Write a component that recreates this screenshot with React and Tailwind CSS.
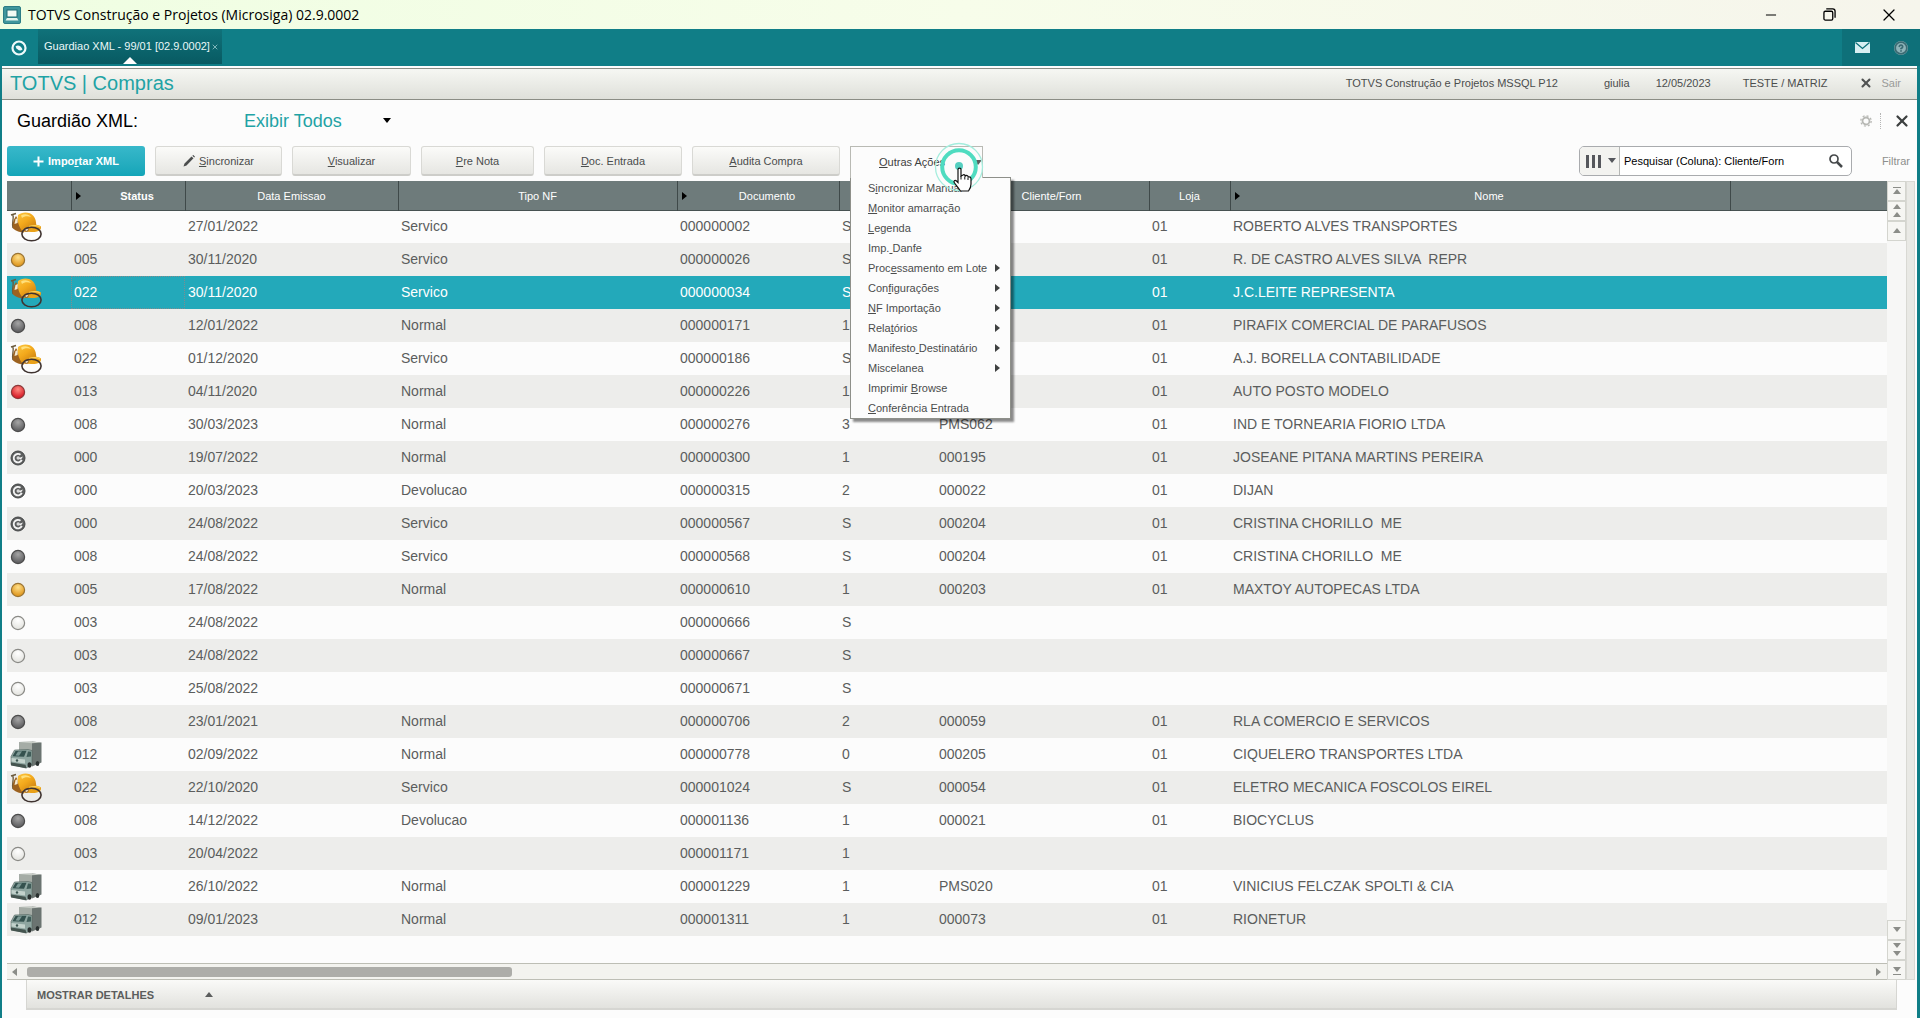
import {
  LuCircleHelp,
  LuMinus,
  LuX,
} from 'react-icons/lu';

const columns = [
  { key: 'status', label: 'Status', width: 'w-[114px]', sorted: true, bold: true },
  { key: 'date', label: 'Data Emissao', width: 'w-[213px]' },
  { key: 'type', label: 'Tipo NF', width: 'w-[279px]' },
  { key: 'doc', label: 'Documento', width: 'w-[162px]', sorted: true },
  { key: 'serie', label: 'Serie', width: 'w-[97px]' },
  { key: 'client', label: 'Cliente/Forn', width: 'w-[213px]', sorted: true },
  { key: 'store', label: 'Loja', width: 'w-[81px]' },
  { key: 'name', label: 'Nome', width: 'w-[500px]', sorted: true },
];

const rows = [
  ['helmet', '022', '27/01/2022', 'Servico', '000000002', 'S', '', '01', 'ROBERTO ALVES TRANSPORTES'],
  ['orange', '005', '30/11/2020', 'Servico', '000000026', 'S', '', '01', 'R. DE CASTRO ALVES SILVA  REPR'],
  ['helmet', '022', '30/11/2020', 'Servico', '000000034', 'S', '', '01', 'J.C.LEITE REPRESENTA'],
  ['gray', '008', '12/01/2022', 'Normal', '000000171', '1', '', '01', 'PIRAFIX COMERCIAL DE PARAFUSOS'],
  ['helmet', '022', '01/12/2020', 'Servico', '000000186', 'S', '', '01', 'A.J. BORELLA CONTABILIDADE'],
  ['red', '013', '04/11/2020', 'Normal', '000000226', '1', '', '01', 'AUTO POSTO MODELO'],
  ['gray', '008', '30/03/2023', 'Normal', '000000276', '3', 'PMS062', '01', 'IND E TORNEARIA FIORIO LTDA'],
  ['c', '000', '19/07/2022', 'Normal', '000000300', '1', '000195', '01', 'JOSEANE PITANA MARTINS PEREIRA'],
  ['c', '000', '20/03/2023', 'Devolucao', '000000315', '2', '000022', '01', 'DIJAN'],
  ['c', '000', '24/08/2022', 'Servico', '000000567', 'S', '000204', '01', 'CRISTINA CHORILLO  ME'],
  ['gray', '008', '24/08/2022', 'Servico', '000000568', 'S', '000204', '01', 'CRISTINA CHORILLO  ME'],
  ['orange', '005', '17/08/2022', 'Normal', '000000610', '1', '000203', '01', 'MAXTOY AUTOPECAS LTDA'],
  ['white', '003', '24/08/2022', '', '000000666', 'S', '', '', ''],
  ['white', '003', '24/08/2022', '', '000000667', 'S', '', '', ''],
  ['white', '003', '25/08/2022', '', '000000671', 'S', '', '', ''],
  ['gray', '008', '23/01/2021', 'Normal', '000000706', '2', '000059', '01', 'RLA COMERCIO E SERVICOS'],
  ['truck', '012', '02/09/2022', 'Normal', '000000778', '0', '000205', '01', 'CIQUELERO TRANSPORTES LTDA'],
  ['helmet', '022', '22/10/2020', 'Servico', '000001024', 'S', '000054', '01', 'ELETRO MECANICA FOSCOLOS EIREL'],
  ['gray', '008', '14/12/2022', 'Devolucao', '000001136', '1', '000021', '01', 'BIOCYCLUS'],
  ['white', '003', '20/04/2022', '', '000001171', '1', '', '', ''],
  ['truck', '012', '26/10/2022', 'Normal', '000001229', '1', 'PMS020', '01', 'VINICIUS FELCZAK SPOLTI & CIA'],
  ['truck', '012', '09/01/2023', 'Normal', '000001311', '1', '000073', '01', 'RIONETUR'],
];

const SELECTED = 2;

// "&" comes before the shortcut letter
const actions = [
  { label: '&Visualizar', width: 'w-[119px]' },
  { label: '&Pre Nota', width: 'w-[113px]' },
  { label: '&Doc. Entrada', width: 'w-[138px]' },
  { label: '&Audita Compra', width: 'w-[148px]' },
];

const menuItems = [
  { label: 'S&incronizar Manual' },
  { label: '&Monitor amarração' },
  { label: '&Legenda' },
  { label: 'Imp.& Danfe' },
  { label: 'Proc&essamento em Lote', sub: true },
  { label: 'Con&figurações', sub: true },
  { label: '&NF Importação', sub: true },
  { label: 'Rela&tórios', sub: true },
  { label: 'Manifesto& Destinatário', sub: true },
  { label: 'Miscelanea', sub: true },
  { label: 'Imprimir &Browse' },
  { label: '&Conferência Entrada' },
];

function Mnemonic({ text }) {
  const i = text.indexOf('&');
  if (i < 0) return <span>{text}</span>;
  return (
    <span className="whitespace-pre">
      {text.slice(0, i)}
      <u>{text[i + 1]}</u>
      {text.slice(i + 2)}
    </span>
  );
}

const ballColors = {
  orange: ['#ffe08a', '#e09a24', '#9a7434'],
  gray: ['#a5a5a5', '#626264', '#4c4c4c'],
  red: ['#ff8a80', '#d81f2a', '#8c3a3a'],
  white: ['#ffffff', '#e6e6e2', '#8a8a86'],
};

function Ball({ color }) {
  const [light, base, edge] = ballColors[color];
  return (
    <svg className="w-4 h-4" viewBox="0 0 16 16">
      <defs>
        <radialGradient id={`ball-${color}`} cx="50%" cy="30%" r="60%">
          <stop offset="0" stopColor={light} />
          <stop offset="1" stopColor={base} />
        </radialGradient>
      </defs>
      <circle cx="8" cy="8" r="6.6" fill={`url(#ball-${color})`} stroke={edge} strokeWidth="1.2" />
    </svg>
  );
}

function Copyright() {
  return (
    <svg className="w-4 h-4" viewBox="0 0 16 16">
      <circle cx="8" cy="8" r="7" fill="#5c5e5e" stroke="#454747" />
      <path d="M10.5 4.8A4.2 4.2 0 1 0 11.8 9.8" fill="none" stroke="#f4f4f4" strokeWidth="1.8" />
      <path d="M7.5 8.5L13 6.5L11 9.5Z" fill="#f4f4f4" />
      <circle cx="8.2" cy="8" r="1.7" fill="#d8d8d8" />
    </svg>
  );
}

function Helmet() {
  return (
    <svg className="w-8 h-[30px]" viewBox="0 0 32 30">
      <defs>
        <linearGradient id="helmet-dome" x1="0" y1="0" x2="0.7" y2="1">
          <stop offset="0" stopColor="#fbc53e" />
          <stop offset="0.5" stopColor="#f3a91c" />
          <stop offset="1" stopColor="#c97f12" />
        </linearGradient>
      </defs>
      <path d="M1 3L6 1.5M3 3C4 7 1.5 12 3 16" fill="none" stroke="#6b5a3c" strokeWidth="1.4" />
      <path d="M6 4C3 8 2 13 3 16.5C6 19 10 20.5 14 20.5L13 15Z" fill="#9c6220" />
      <path d="M5.500 7L8 6L7.500 11L4.500 12Z" fill="#f3ead2" />
      <path d="M8 3C12 -0.5 20 -0.5 23.500 4C26 7.500 26.500 11 26 15C23 19.500 17 20.500 13 19.500C9 16 7 9 8 3Z" fill="url(#helmet-dome)" />
      <path d="M11 3.500C14 1.500 19 2 21 5C18 3.500 14 4 12 6Z" fill="#ffe07c" />
      <path d="M19 13.500C23 12.500 29 12.500 31 14.500C31.500 17 30 19 27 19.500C23 20.500 19 20 17 19Z" fill="#e9a119" />
      <path d="M19 14.500C23 13.500 28 13.500 30 15" fill="none" stroke="#fcd25a" strokeWidth="1.200" />
      <circle cx="16.500" cy="17.500" r="1.800" fill="#f5e9cf" stroke="#7b4a1a" strokeWidth="0.800" />
      <ellipse cx="21.500" cy="22" rx="9.600" ry="6.800" fill="none" stroke="#3f3330" strokeWidth="1.600" />
    </svg>
  );
}

function Truck() {
  return (
    <svg className="w-8 h-7" viewBox="0 0 32 28">
      <path d="M9 1L22 0.500V13H9Z" fill="#a5aca6" />
      <path d="M22 0.500L31.500 1.500V21.500L22 25.500Z" fill="#6b7471" />
      <path d="M9 1L22 0.500L31.500 1.500L22 2.200Z" fill="#c7ccc6" />
      <path d="M4.500 9L18 8.500L22 9.500V24L16 27L1 23.500V15.500Z" fill="#8ea5a0" stroke="#51615d" strokeWidth="0.600" />
      <path d="M5.500 10L16.500 9.800L14 15.800L2.500 15.200Z" fill="#34514e" />
      <path d="M8 10.500L12 10.300L9 14.800L5.500 14.600Z" fill="#7c9894" />
      <path d="M18 10.500L21 10.800V15.500L16.500 16Z" fill="#3f5c58" />
      <path d="M1.500 17L15 18.500V22.500L1.500 20.500Z" fill="#c3d2cc" />
      <path d="M1 21.500L15.500 23.800L16.500 27.300L1 24.500Z" fill="#44544f" />
      <circle cx="7" cy="19.500" r="1.200" fill="#3b5550" />
      <ellipse cx="19.500" cy="24" rx="2" ry="2.800" fill="#2a3130" />
      <ellipse cx="27.500" cy="22.500" rx="1.800" ry="2.500" fill="#2a3130" />
    </svg>
  );
}

function StatusIcon({ kind }) {
  if (kind === 'helmet') return <Helmet />;
  if (kind === 'truck') return <Truck />;
  if (kind === 'c') return <Copyright />;
  return <Ball color={kind} />;
}

const triangles = {
  right: '1,0 6,4 1,8',
  left: '6,0 1,4 6,8',
  down: '0,1 8,1 4,6',
  up: '0,6 8,6 4,1',
};

function Triangle({ dir, className }) {
  return (
    <svg className={`w-2 h-2 shrink-0 fill-current ${className ?? ''}`} viewBox="0 0 8 8">
      <polygon points={triangles[dir]} />
    </svg>
  );
}

function TitleBar() {
  return (
    <header className="flex items-center h-[29px] pl-[3px] bg-linear-to-r from-[#effee2] via-[#f7fdea] to-[#f6f5ec]">
      <svg className="w-[18px] h-[18px]" viewBox="0 0 18 18">
        <rect x="0.500" y="0.500" width="17" height="17" rx="1.500" fill="#3f979d" stroke="#2c7d86" />
        <rect x="4" y="4" width="10" height="7" fill="#f3fbf4" stroke="#1f6c75" />
        <path d="M2.500 14.500H15.500L14 12H4Z" fill="#e3f4ec" />
      </svg>
      <h1 className="pl-[7px] font-['Open_Sans',sans-serif] text-[14px] text-black">
        TOTVS Construção e Projetos (Microsiga) 02.9.0002
      </h1>
      <div className="flex ml-auto text-black">
        <button className="w-[58px] h-[29px] flex items-center justify-center" aria-label="Minimizar">
          <LuMinus className="w-4 h-4" strokeWidth="1.500" />
        </button>
        <button className="w-[58px] h-[29px] flex items-center justify-center" aria-label="Restaurar">
          <svg className="w-[13px] h-[13px]" viewBox="0 0 14 14" fill="none" stroke="currentColor" strokeWidth="1.400">
            <rect x="1" y="3.500" width="9.500" height="9.500" rx="1.500" />
            <path d="M3.500 1H10.500Q13 1 13 3.500V10.500" />
          </svg>
        </button>
        <button className="w-[62px] h-[29px] flex items-center justify-center" aria-label="Fechar">
          <LuX className="w-5 h-5" strokeWidth="1.500" />
        </button>
      </div>
    </header>
  );
}

function TabBar() {
  return (
    <div className="flex items-stretch h-[37px] bg-[#107e87] text-[11px]">
      <button className="w-[38px] flex items-center justify-center" aria-label="Início">
        <svg className="w-4 h-4" viewBox="0 0 16 16">
          <circle cx="8" cy="8" r="6.500" fill="none" stroke="#effafa" strokeWidth="2.200" />
          <path d="M4.500 6.500C7 4.500 10 6 11.500 9.500C9 11.500 6 10 4.500 6.500Z" fill="#effafa" />
        </svg>
      </button>
      <div className="relative flex items-center w-[184px] h-[35px] pl-[6px] bg-linear-to-b from-[#10727a] to-[#085a62] text-[#eaf8f8]">
        <a href="#guardiao" className="whitespace-nowrap">Guardiao XML - 99/01 [02.9.0002]</a>
        <button className="ml-auto mr-[3px] text-[#b9dfe1]" aria-label="Fechar aba">
          <LuX className="w-2 h-2" />
        </button>
        <svg className="absolute bottom-0 left-[85px] w-[14px] h-[7px]" viewBox="0 0 14 7">
          <polygon points="0,7 7,0 14,7" fill="#fff" />
        </svg>
      </div>
      <div className="flex items-center gap-6 ml-auto pl-[13px] pr-3 bg-[#0e7079]">
        <button aria-label="Mensagens">
          <svg className="w-[15px] h-[11px]" viewBox="0 0 15 11">
            <rect width="15" height="11" fill="#d9eff2" />
            <path d="M0.500 0.500L7.500 6.500L14.500 0.500" fill="none" stroke="#0e7079" strokeWidth="1.300" />
          </svg>
        </button>
        <button className="rounded-full bg-[#8db3b8] text-[#3a6b73]" aria-label="Ajuda">
          <LuCircleHelp className="w-[14px] h-[14px]" strokeWidth="3" />
        </button>
      </div>
    </div>
  );
}

function ModuleBar() {
  return (
    <div className="flex items-center h-8 mt-[2px] pb-[2px] pl-2 pr-4 border-y border-[#8b8d85] bg-linear-to-b from-[#f6f7f3] to-[#dfe0da] text-[11px] text-[#4b4d4d]">
      <h2 className="text-[20px] leading-6 text-[#1fa3a5]">TOTVS | Compras</h2>
      <span className="ml-auto">TOTVS Construção e Projetos MSSQL P12</span>
      <span className="ml-[46px]">giulia</span>
      <span className="ml-[26px]">12/05/2023</span>
      <span className="ml-8">TESTE / MATRIZ</span>
      <button className="flex items-center gap-2 ml-8 text-[#9a9b99]">
        <LuX className="w-[14px] h-[14px] text-[#505252]" strokeWidth="3.500" />
        Sair
      </button>
    </div>
  );
}

function BrowseTitle() {
  return (
    <div className="flex items-center h-[42px] pl-[15px] pr-[6px] text-[18px]">
      <label htmlFor="view" className="w-[227px] text-black">Guardião XML:</label>
      <div className="relative flex items-center">
        <select id="view" className="appearance-none w-[151px] text-[#1fa3a5] bg-transparent outline-none">
          <option>Exibir Todos</option>
        </select>
        <Triangle dir="down" className="absolute right-1 text-black pointer-events-none" />
      </div>
      <div className="flex items-center ml-auto">
        <button aria-label="Configurar">
          <svg className="w-3 h-3" viewBox="0 0 12 12" fill="none" stroke="#b7b8b4">
            <circle cx="6" cy="6" r="3.500" strokeWidth="1.800" />
            <circle cx="6" cy="6" r="5.200" strokeWidth="1.300" strokeDasharray="2 2.080" />
          </svg>
        </button>
        <span className="h-4 ml-2 mr-3 border-l border-dotted border-[#b5b5b5]" />
        <button aria-label="Fechar consulta">
          <LuX className="w-[18px] h-[18px] text-[#3d4040]" strokeWidth="3" />
        </button>
      </div>
    </div>
  );
}

const buttonStyle =
  'h-[30px] flex items-center justify-center rounded-[3px] border border-[#d9d9d5] border-b-2 border-b-[#cdcdc9] bg-linear-to-b from-[#fbfbf9] to-[#e6e6e2] pt-px text-[#4b4d4d]';

function ActionsMenu() {
  return (
    <div className="relative z-10 h-[30px]">
      <button className="relative z-10 flex items-center justify-between w-[133px] h-8 pl-7 border border-b-0 border-[#b9bab4] bg-[#fcfcfc] text-[#3f4141]" aria-haspopup="menu" aria-expanded="true">
        <Mnemonic text="&Outras Ações" />
        <Triangle dir="down" className="text-[#5a5c5c]" />
      </button>
      <ul className="absolute left-0 top-[31px] w-[161px] h-[242px] border border-[#8e908a] bg-[#fcfcfc] shadow-[3px_3px_2px_rgba(0,0,0,0.450)] text-[#4b4d4d]" role="menu">
        {menuItems.map(({ label, sub }) => (
          <li key={label} role="none">
            <button className="flex items-center justify-between w-full h-5 pl-[17px] pr-2" role="menuitem">
              <Mnemonic text={label} />
              {sub && <Triangle dir="right" className="text-[#3f4141]" />}
            </button>
          </li>
        ))}
      </ul>
      {/* Click ripple and pointer */}
      <svg className="absolute z-20 left-[84px] -top-[4px] w-[50px] h-[52px] pointer-events-none" viewBox="0 0 50 52">
        <circle cx="25" cy="25" r="23.500" fill="none" stroke="#a4eddd" strokeWidth="1.300" />
        <circle cx="25" cy="25" r="16.800" fill="none" stroke="#4fdcc0" strokeWidth="4" />
        <circle cx="25" cy="24" r="4" fill="#55cfc0" />
        <path d="M24 27.500C24 25.700 27 25.700 27 27.500V34L29 33C30 32.300 31 33 31.300 34C32.500 33 34 33.500 34.300 35C36 34.300 37 35.500 37 37V42C37 45 36 47 34.500 49H26.500C24.500 46 22 43 20.500 41C19 39 21 37.500 22.500 39L24 40.500Z" fill="#fff" stroke="#111" strokeWidth="1.200" />
        <path d="M27 34V37.500M30.800 34.500V37.500M34 35.500V38" stroke="#111" />
      </svg>
    </div>
  );
}

function Toolbar() {
  return (
    <div className="flex items-center gap-[10px] h-[30px] ml-[5px] mr-[7px] mt-1 text-[11px]">
      <button className="h-[30px] w-[138px] flex items-center justify-center gap-1 rounded-[3px] bg-linear-to-b from-[#37b8ca] to-[#12a5b8] font-bold text-white">
        <svg className="w-[11px] h-[11px]" viewBox="0 0 11 11" stroke="#fff" strokeWidth="2">
          <path d="M5.500 0.500V10.500M0.500 5.500H10.500" />
        </svg>
        <Mnemonic text="Impo&rtar XML" />
      </button>
      <button className={`${buttonStyle} w-[127px] gap-1`}>
        <svg className="w-3 h-3" viewBox="0 0 12 12" fill="#4b4d4d">
          <path d="M0.500 11.500L1.500 8.500L8.500 1.500L10.500 3.200L3.500 10.500ZM9.300 0.800L10.300 0L12 1.700L11.200 2.500Z" />
        </svg>
        <Mnemonic text="&Sincronizar" />
      </button>
      {actions.map(({ label, width }) => (
        <button key={label} className={`${buttonStyle} ${width}`}>
          <Mnemonic text={label} />
        </button>
      ))}
      <ActionsMenu />
      <div className="flex items-center w-[273px] h-[30px] ml-auto border border-[#a9abae] rounded-[5px] bg-white overflow-hidden">
        <button className="flex items-center justify-between w-10 h-full pl-[6px] pr-[3px] border-r border-[#b5b7b5] bg-[#f3f3f0] text-[#55575c]" aria-label="Escolher coluna">
          <svg className="w-[15px] h-[13px]" viewBox="0 0 15 13" fill="currentColor">
            <path d="M0 0H3V13H0ZM6 0H9V13H6ZM12 0H15V13H12Z" />
          </svg>
          <Triangle dir="down" />
        </button>
        <input aria-label="Pesquisar" className="flex-1 min-w-0 h-full pl-1 text-black outline-none" defaultValue="Pesquisar (Coluna): Cliente/Forn" />
        <button className="pr-2" aria-label="Buscar">
          <svg className="w-[14px] h-[14px]" viewBox="0 0 14 14" fill="none" stroke="#46494b">
            <circle cx="5" cy="5" r="4" strokeWidth="1.700" />
            <path d="M8 8L13 13" strokeWidth="2.500" />
          </svg>
        </button>
      </div>
      <button className="w-9 ml-3 text-right text-[#8d8f8d]">Filtrar</button>
    </div>
  );
}

function ScrollButton({ label, children }) {
  return (
    <button className="flex flex-col items-center justify-center w-[19px] h-5 border border-[#d4d5cf] bg-[#f6f6f3] text-[#8b8d88]" aria-label={label}>
      {children}
    </button>
  );
}

function VerticalScroll() {
  return (
    <div className="flex flex-col justify-between w-[19px] bg-[#f7f7f6]">
      <div>
        <ScrollButton label="Início da lista">
          <span className="w-2 border-t border-current" />
          <Triangle dir="up" />
        </ScrollButton>
        <ScrollButton label="Página anterior">
          <Triangle dir="up" />
          <Triangle dir="up" />
        </ScrollButton>
        <ScrollButton label="Linha anterior"><Triangle dir="up" /></ScrollButton>
      </div>
      <div>
        <ScrollButton label="Próxima linha"><Triangle dir="down" /></ScrollButton>
        <ScrollButton label="Próxima página">
          <Triangle dir="down" />
          <Triangle dir="down" />
        </ScrollButton>
        <ScrollButton label="Fim da lista">
          <Triangle dir="down" />
          <span className="w-2 border-t border-current" />
        </ScrollButton>
      </div>
    </div>
  );
}

function rowStyle(i) {
  if (i === SELECTED) return 'bg-[#23a9ba] text-white';
  return i % 2 ? 'bg-[#ededeb] text-[#5b5d5d]' : 'text-[#5b5d5d]';
}

function InvoiceTable() {
  return (
    <table className="w-full table-fixed text-[14px]">
      <thead>
        <tr className="h-[29px] bg-[#6e7b7b] text-[11px] text-white border-b border-[#475252]">
          <th className="w-16 border-r border-[#3f4949]" aria-label="Legenda" />
          {columns.map(({ key, label, width, sorted, bold }) => (
            <th key={key} className={`${width} border-r border-[#3f4949] p-0 pt-[2px] ${bold ? 'font-bold' : 'font-normal'}`}>
              <div className="flex items-center">
                {sorted && <Triangle dir="right" className="ml-[3px] mr-[7px] text-black" />}
                <span className="flex-1 text-center">{label}</span>
              </div>
            </th>
          ))}
          <th aria-label="Vazio" />
        </tr>
      </thead>
      <tbody>
        {rows.map(([icon, ...cells], i) => (
          <tr key={cells[3]} className={`h-[33px] ${rowStyle(i)}`}>
            <td className="p-0 pl-[3px]"><StatusIcon kind={icon} /></td>
            {cells.map((value, j) => (
              <td
                key={columns[j].key}
                className={`p-0 pl-[3px] whitespace-pre ${i === SELECTED && j === 0 ? 'outline-1 outline-dotted -outline-offset-1 outline-[#7d8d90]' : ''}`}
              >
                {value}
              </td>
            ))}
            <td />
          </tr>
        ))}
      </tbody>
    </table>
  );
}

export default function App() {
  return (
    <div className="flex flex-col min-h-screen bg-[#107e87] font-['Liberation_Sans',Arial,sans-serif]">
      <TitleBar />
      <TabBar />
      <main className="flex flex-col flex-1 ml-[2px] mr-[3px] bg-[#fcfcfc]">
        <ModuleBar />
        <BrowseTitle />
        <Toolbar />
        <div className="flex flex-1 mt-[5px] ml-[5px]">
          <div className="flex flex-col flex-1 min-w-0">
            <div className="flex-1">
              <InvoiceTable />
            </div>
            <div className="flex items-center justify-between h-[17px] px-1 border-y border-[#bdbeb5] bg-[#f3f3ef] text-[#8b8d88]">
              <div className="flex items-center flex-1 gap-2">
                <Triangle dir="left" />
                <div className="w-[26%] h-[10px] rounded-[3px] bg-[#adada9]" />
              </div>
              <Triangle dir="right" />
            </div>
          </div>
          <VerticalScroll />
          <div className="w-[9px] mr-[2px] border border-[#d9d9d4] bg-[#e9e9e5]" />
        </div>
        <button className="flex items-center h-[30px] ml-6 mr-5 mb-2 pl-[10px] pt-[2px] border border-t-0 border-[#d6d6d2] border-b-2 bg-linear-to-b from-[#fafaf8] to-[#e2e2de] text-[11px] font-bold text-[#5b5d5d]">
          <span className="w-[168px] text-left">MOSTRAR DETALHES</span>
          <Triangle dir="up" />
        </button>
      </main>
    </div>
  );
}
